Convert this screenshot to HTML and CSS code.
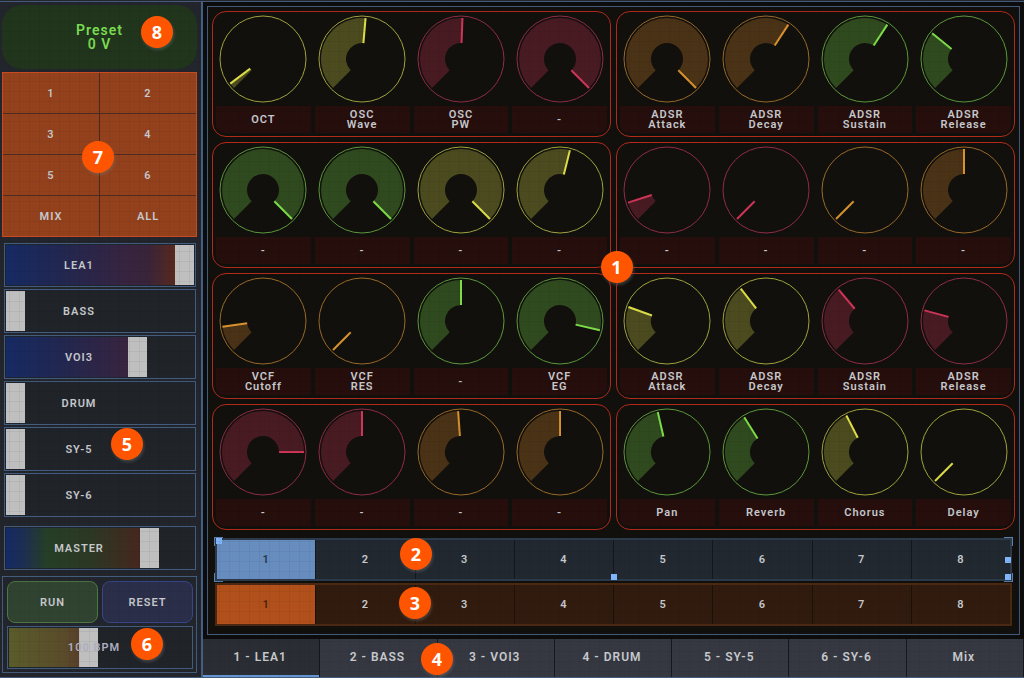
FILE: index.html
```
<!DOCTYPE html>
<html lang="en">
<head>
  <meta charset="UTF-8" />
  <meta name="viewport" content="width=device-width, initial-scale=1.0"/>
  <title>Synth Control Surface</title>
  <link rel="stylesheet" href="styles.css">
</head>
<body>
  <div class="app">
    <aside class="sidebar">
      <div class="preset">
        <div>Preset</div>
        <div>0 V</div>
        <span class="badge badge-8">8</span>
      </div>

      <div class="pads">
        <button>1</button>
        <button>2</button>
        <button>3</button>
        <button>4</button>
        <button>5</button>
        <button>6</button>
        <button>MIX</button>
        <button>ALL</button>
        <span class="badge badge-7">7</span>
      </div>

      <div class="faders">
        <label class="fader"><input type="range" value="100"><span>LEA1</span></label>
        <label class="fader"><input type="range" value="0"><span>BASS</span></label>
        <label class="fader"><input type="range" value="72"><span>VOI3</span></label>
        <label class="fader"><input type="range" value="0"><span>DRUM</span></label>
        <label class="fader"><input type="range" value="0"><span>SY-5</span></label>
        <label class="fader"><input type="range" value="0"><span>SY-6</span></label>
        <label class="fader master"><input type="range" value="79"><span>MASTER</span></label>
        <span class="badge badge-5">5</span>
      </div>

      <div class="transport">
        <button class="run">RUN</button>
        <button class="reset">RESET</button>
        <label class="fader bpm"><input type="range" value="43"><span>100 BPM</span></label>
        <span class="badge badge-6">6</span>
      </div>
    </aside>

    <main class="main">
      <section class="panel">
        <div class="groups">
          <div id="groups" class="group-grid"></div>
          <span class="badge badge-1">1</span>
        </div>

        <div class="steps steps-blue">
          <button class="active">1</button>
          <button>2</button>
          <button>3</button>
          <button>4</button>
          <button>5</button>
          <button>6</button>
          <button>7</button>
          <button>8</button>
          <i class="corner tl"></i>
          <i class="corner tr"></i>
          <i class="corner bl"></i>
          <i class="corner br"></i>
          <i class="handle handle-tl"></i>
          <i class="handle handle-b"></i>
          <i class="handle handle-r"></i>
          <i class="handle handle-br"></i>
          <span class="badge badge-2">2</span>
        </div>

        <div class="steps steps-orange">
          <button class="active">1</button>
          <button>2</button>
          <button>3</button>
          <button>4</button>
          <button>5</button>
          <button>6</button>
          <button>7</button>
          <button>8</button>
          <span class="badge badge-3">3</span>
        </div>
      </section>

      <nav class="tabs">
        <button class="active">1 - LEA1</button>
        <button>2 - BASS</button>
        <button>3 - VOI3</button>
        <button>4 - DRUM</button>
        <button>5 - SY-5</button>
        <button>6 - SY-6</button>
        <button>Mix</button>
        <span class="badge badge-4">4</span>
      </nav>
    </main>
  </div>

  <script src="script.js"></script>
</body>
</html>
```
FILE: styles.css
```
* {
  box-sizing: border-box;
}

body {
  margin: 0;
  padding-top: 1px;
  background: #23272d;
  font-family: Roboto, "Liberation Sans", sans-serif;
  font-size: 11px;
  font-weight: 600;
  letter-spacing: 1px;
  color: #c6c8cc;
}

button {
  margin: 0;
  padding: 0;
  border: 0;
  background: none;
  font: inherit;
  letter-spacing: inherit;
  color: inherit;
  cursor: pointer;
}

.app {
  position: relative;
  display: flex;
  min-height: calc(100vh - 1px);
  border-top: 1px solid #435a78;
  border-bottom: 1px solid #435a78;
}

/* faint grid texture over everything */
.app::after {
  content: "";
  position: absolute;
  inset: 0;
  pointer-events: none;
  background:
    repeating-linear-gradient(to right, transparent 0 9px, rgba(0, 0, 0, 0.05) 9px 10px),
    repeating-linear-gradient(to bottom, transparent 0 9px, rgba(0, 0, 0, 0.05) 9px 10px);
}

/* sidebar */
.sidebar {
  flex: 0 0 203px;
  padding: 3px 4px 3px 2px;
  background: #22252b;
  border-right: 2px solid #435f85;
}

.preset {
  position: relative;
  display: flex;
  flex-direction: column;
  align-items: center;
  justify-content: center;
  height: 64px;
  border-radius: 20px;
  background: #20351c;
  color: #7bdc52;
  font-size: 14px;
  line-height: 14px;
}

.pads {
  position: relative;
  display: grid;
  grid-template-columns: 1fr 1fr;
  grid-auto-rows: 40px;
  gap: 1px;
  margin-top: 3px;
  background: #4c2b20;
  border: 1px solid #c64b20;
}

.pads button {
  background: #93411c;
}

.faders {
  position: relative;
  display: flex;
  flex-direction: column;
  gap: 2px;
  margin: 6px 1px 0 2px;
}

.fader {
  --tint: linear-gradient(to right, #162a63, #222750 30%, #38243f 65%, #38243a 75%, #58291f 90%);
  position: relative;
  display: block;
  height: 44px;
  border: 1px solid #435c7c;
  background: #202428;
}

.fader.master {
  --tint: linear-gradient(to right, #152a66, #1d2f50 10%, #263f26 22%, #2c3824 45%, #46271f 72%);
  margin-top: 7px;
}

.fader.bpm {
  --tint: linear-gradient(to right, #5a5c2b, #5a4c2a 30%, #56352a 45%);
  grid-column: 1 / 3;
  height: 43px;
}

.fader input {
  appearance: none;
  display: block;
  width: 100%;
  height: 100%;
  margin: 0;
  background: linear-gradient(to right, transparent var(--fill, 0%), #202428 var(--fill, 0%)), var(--tint);
  border: 1px solid #1d242e;
}

.fader input::-webkit-slider-thumb {
  appearance: none;
  width: 19px;
  height: 40px;
  background: #bfbfbf;
}

.fader.bpm input::-webkit-slider-thumb {
  height: 39px;
}

.fader span {
  position: absolute;
  inset: 0 42px 0 0;
  display: flex;
  align-items: center;
  justify-content: center;
  pointer-events: none;
}

.fader.bpm span {
  right: 12px;
  color: #aeaec0;
}

.transport {
  position: relative;
  display: grid;
  grid-template-columns: 1fr 1fr;
  gap: 3px 4px;
  margin-top: 6px;
  padding: 4px 3px 3px 4px;
  border: 1px solid #435c7c;
}

.transport button {
  height: 42px;
  border: 1px solid;
  border-radius: 8px;
}

.transport .run {
  background: #304331;
  border-color: #4d7743;
}

.transport .reset {
  background: #2a2e48;
  border-color: #37468a;
}

/* main */
.main {
  flex: 1;
  min-width: 0;
  display: flex;
  flex-direction: column;
  background: #0c0c0c;
}

.panel {
  margin: 4px;
  padding: 4px 4px 8px;
  border: 1px solid #435c7c;
  background: #12100d;
}

.groups {
  position: relative;
}

.group-grid {
  display: grid;
  grid-template-columns: 1fr 1fr;
  gap: 5px;
}

.group {
  display: grid;
  grid-template-columns: repeat(4, 1fr);
  gap: 4px;
  padding: 3px;
  border: 1px solid #b3291a;
  border-radius: 14px;
  background: #12100d;
}

.knob {
  position: relative;
  display: flex;
  flex-direction: column;
  align-items: center;
  gap: 3px;
}

.knob svg {
  width: 88px;
  height: 88px;
}

.knob input {
  position: absolute;
  top: 0;
  left: 0;
  width: 100%;
  height: 88px;
  margin: 0;
  opacity: 0;
}

.knob span {
  display: flex;
  align-items: center;
  justify-content: center;
  width: 100%;
  height: 27px;
  background: #250e0c;
  line-height: 10px;
  text-align: center;
  white-space: pre-line;
}

.knob:first-child span {
  border-bottom-left-radius: 8px;
}

.knob:last-child span {
  border-bottom-right-radius: 8px;
}

.knob .ring {
  fill: none;
  stroke: var(--ring);
}

.knob .arc {
  fill: var(--arc);
}

.knob .pointer {
  stroke: var(--pointer);
  stroke-width: 2;
}

.yellow {
  --ring: #a0a33c;
  --arc: #4b4b1f;
  --pointer: #dcdd49;
}

.pink {
  --ring: #8f2c47;
  --arc: #481a22;
  --pointer: #cf3558;
}

.orange {
  --ring: #996a28;
  --arc: #4a3216;
  --pointer: #d8932e;
}

.green {
  --ring: #5b993a;
  --arc: #2f4a1e;
  --pointer: #7ddd48;
}

.steps {
  position: relative;
  display: grid;
  grid-template-columns: repeat(8, 1fr);
  gap: 1px;
  height: 43px;
  margin: 2px 3px 0;
  border: 2px solid;
}

.steps-blue {
  margin-top: 8px;
  border-color: #2b3a4a;
  background: #13171b;
}

.steps-blue button {
  background: #212830;
}

.steps-blue .active {
  background: #678dbf;
  color: #263548;
}

.steps-orange {
  border-color: #4b2812;
  background: #1c1009;
}

.steps-orange button {
  background: #301b0e;
}

.steps-orange .active {
  background: #b1501b;
  color: #4a230d;
}

/* selection marks on the blue row */
.corner {
  position: absolute;
  width: 9px;
  height: 9px;
  border: 0 solid #5a81b2;
}

.tl { top: -3px; left: -3px; border-width: 1px 0 0 1px; }
.tr { top: -3px; right: -3px; border-width: 1px 1px 0 0; }
.bl { bottom: -3px; left: -3px; border-width: 0 0 1px 1px; }
.br { bottom: -3px; right: -3px; border-width: 0 1px 1px 0; }

.handle {
  position: absolute;
  width: 6px;
  height: 6px;
  background: #80b5fa;
}

.handle-tl { top: -2px; left: -1px; }
.handle-b { bottom: -1px; left: calc(50% - 3px); }
.handle-r { top: calc(50% - 3px); right: -1px; }
.handle-br { bottom: -1px; right: -1px; }

.tabs {
  position: relative;
  flex: 1;
  display: grid;
  grid-template-columns: repeat(7, 1fr);
  gap: 1px;
  min-height: 37px;
  padding-right: 1px;
  background: #16181c;
}

.tabs button {
  padding-right: 2px;
  background: #353841;
  border-bottom: 2px solid #353841;
  font-size: 12px;
}

.tabs .active {
  background: #2a2d33;
  border-bottom-color: #6494d2;
}

/* numbered callouts */
.badge {
  position: absolute;
  z-index: 2;
  width: 32px;
  height: 32px;
  border-radius: 50%;
  background: #ff5500;
  box-shadow: 1px 2px 3px rgba(120, 120, 120, 0.4);
  color: #fff;
  font: bold 18px/32px "Noto Sans", sans-serif;
  letter-spacing: 0;
  text-align: center;
}

.badge-1 { left: calc(50% - 13px); top: 240px; }
.badge-2 { left: 183px; top: -2px; }
.badge-3 { left: 182px; top: 2px; }
.badge-4 { left: 218px; top: 4px; }
.badge-5 { left: 107px; top: 185px; }
.badge-6 { left: 128px; top: 51px; }
.badge-7 { left: 79px; top: 68px; }
.badge-8 { left: 139px; top: 11px; }
```
FILE: script.js
```
// [label, color, angle], angle runs from -135 to 135
const groups = [
  [["OCT", "yellow", -127], ["OSC\nWave", "yellow", 5], ["OSC\nPW", "pink", 2], ["-", "pink", 135]],
  [["ADSR\nAttack", "orange", 135], ["ADSR\nDecay", "orange", 33], ["ADSR\nSustain", "green", 33], ["ADSR\nRelease", "green", -51]],
  [["-", "green", 135], ["-", "green", 135], ["-", "yellow", 135], ["-", "yellow", 14]],
  [["-", "pink", -108], ["-", "pink", -135], ["-", "orange", -135], ["-", "orange", 0]],
  [["VCF\nCutoff", "orange", -98], ["VCF\nRES", "orange", -135], ["-", "green", 0], ["VCF\nEG", "green", 103]],
  [["ADSR\nAttack", "yellow", -70], ["ADSR\nDecay", "yellow", -38], ["ADSR\nSustain", "pink", -40], ["ADSR\nRelease", "pink", -75]],
  [["-", "pink", 90], ["-", "pink", 0], ["-", "orange", -4], ["-", "orange", 0]],
  [["Pan", "green", -13], ["Reverb", "green", -32], ["Chorus", "yellow", -27], ["Delay", "yellow", -135]]
];

function point(angle, r) {
  const a = angle * Math.PI / 180;
  return (44 + r * Math.sin(a)).toFixed(2) + " " + (44 - r * Math.cos(a)).toFixed(2);
}

function drawKnob(knob, angle) {
  const large = angle > 45 ? 1 : 0;
  knob.querySelector(".arc").setAttribute("d",
    `M${point(-135, 41)} A41 41 0 ${large} 1 ${point(angle, 41)} L${point(angle, 16)} A16 16 0 ${large} 0 ${point(-135, 16)} Z`);
  knob.querySelector(".pointer").setAttribute("d", `M${point(angle, 16)} L${point(angle, 41)}`);
}

const grid = document.getElementById("groups");

groups.forEach(knobs => {
  const group = document.createElement("div");
  group.className = "group";
  knobs.forEach(([name, color, angle]) => {
    const knob = document.createElement("label");
    knob.className = "knob " + color;
    knob.innerHTML = `
      <svg viewBox="0 0 88 88"><circle class="ring" cx="44" cy="44" r="43"/><path class="arc"/><path class="pointer"/></svg>
      <input type="range" min="-135" max="135" value="${angle}">
      <span>${name}</span>`;
    drawKnob(knob, angle);
    knob.querySelector("input").addEventListener("input", e => drawKnob(knob, Number(e.target.value)));
    group.appendChild(knob);
  });
  grid.appendChild(group);
});

document.querySelectorAll(".fader input").forEach(input => {
  const update = () => input.style.setProperty("--fill", input.value + "%");
  input.addEventListener("input", update);
  update();
});

// one active button per row
document.querySelectorAll(".steps, .tabs").forEach(row => {
  row.addEventListener("click", e => {
    if (e.target.tagName !== "BUTTON") return;
    row.querySelector(".active").classList.remove("active");
    e.target.classList.add("active");
  });
});
```
